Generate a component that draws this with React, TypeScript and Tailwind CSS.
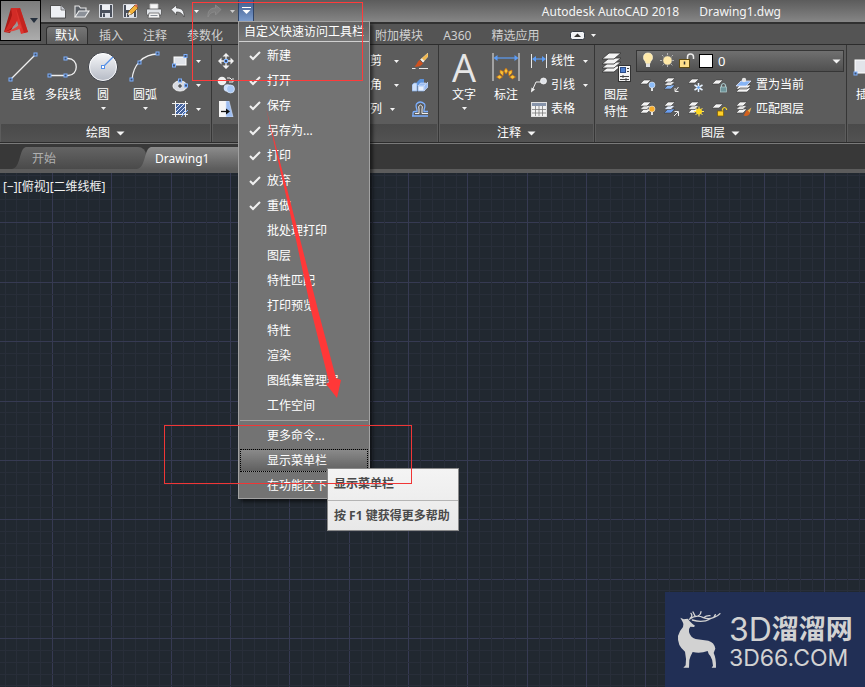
import { useState, type ReactNode } from 'react';

const FONT = "font-['Noto_Sans','Noto_Sans_CJK_SC',sans-serif]";

const ribbonTabs = ['默认', '插入', '注释', '参数化', '视图', '管理', '输出', '附加模块', 'A360', '精选应用'];

const quickItems = [
  '新建', '打开', '保存', '另存为...', '打印', '放弃', '重做', '批处理打印',
  '图层', '特性匹配', '打印预览', '特性', '渲染', '图纸集管理器', '工作空间',
];

const BLUE = '#7db0ff';

/* ---------- icons ---------- */

function Icon({ w = 16, h = 16, children }: { w?: number; h?: number; children: ReactNode }) {
  return (
    <svg width={w} height={h} viewBox={`0 0 ${w} ${h}`} fill="none" className="shrink-0" aria-hidden="true">
      {children}
    </svg>
  );
}

function Caret({ big = false }: { big?: boolean }) {
  return big ? (
    <Icon w={9} h={5}><path d="M0.5 0.5h8L4.5 4.5z" fill="#f4f4f4" /></Icon>
  ) : (
    <Icon w={5} h={3}><path d="M0 0h5L2.5 3z" fill="#f4f4f4" /></Icon>
  );
}

function Grip({ x, y }: { x: number; y: number }) {
  return <rect x={x - 1.5} y={y - 1.5} width="3" height="3" fill="#40506a" stroke={BLUE} />;
}

// a sheet seen from the side, used by every layer icon
function Sheet({ x, y, fill = '#f4f4f4' }: { x: number; y: number; fill?: string }) {
  return <path d={`M${x} ${y + 4}l4-4h7l-4 4z`} fill={fill} stroke="#3c3c3c" strokeWidth="0.6" />;
}

function Stack({ mid = '#e4e4e4', low = '#f4f4f4' }: { mid?: string; low?: string }) {
  return (
    <>
      <Sheet x={0} y={8} fill={low} />
      <Sheet x={0} y={4.5} fill={mid} />
      <Sheet x={0} y={1} />
    </>
  );
}

const NewIcon = () => (
  <Icon>
    <path d="M0.500 2.500h10.500l4.500 4.500v8h-15z" fill="#eef0f4" stroke="#3a3a3a" strokeWidth="0.8" />
    <path d="M11 2.500v4.500h4.500" fill="#c6cad2" stroke="#666" strokeWidth="0.8" />
  </Icon>
);

const OpenIcon = () => (
  <Icon>
    <path d="M1 14V3h4l1.5 2H12v3" fill="#5a5f66" stroke="#e8e8e8" strokeWidth="1.1" />
    <path d="M1 14l4-6h10l-4 6z" fill="#8b9098" stroke="#f0f0f0" strokeWidth="1.1" />
  </Icon>
);

const SaveIcon = ({ pen = false }: { pen?: boolean }) => (
  <Icon>
    <path d="M1.5 1.5h13v13h-13z" fill="#4a505c" stroke="#d6d9df" />
    <path d="M4 2h8v5H4z" fill="#eef0f4" />
    <path d="M4 10h8v4H4z" fill="#e0e3ea" />
    <path d="M5 10.5h2V14H5z" fill="#4a505c" />
    {pen && (
      <>
        <path d="M6 12l1-4 6-6 3 3-6 6z" fill="#f3b23a" stroke="#6d4a16" strokeWidth="0.7" />
        <path d="M12.5 2.5l1.5-1.5 2 2-1.5 1.5z" fill="#d86a4a" />
        <path d="M6 12l1-3 2 2z" fill="#fff" />
      </>
    )}
  </Icon>
);

const PrintIcon = () => (
  <Icon>
    <path d="M4 6V1h8v5" fill="#f6f6f6" stroke="#c4c4c4" strokeWidth="0.8" />
    <rect x="0.5" y="6" width="15" height="6" rx="1" fill="#dfe2e6" stroke="#444" strokeWidth="0.7" />
    <path d="M3 10h10l1 5H2z" fill="#f2f2f2" stroke="#555" strokeWidth="0.7" />
    <path d="M4.5 12.5h7" stroke="#8a9098" />
  </Icon>
);

const UndoIcon = ({ redo = false }: { redo?: boolean }) => (
  <Icon>
    <path
      d={redo ? 'M15 6.5L9.500 2v3C4 5 1.500 8 2 14c2-4 4-5 7.500-5v3z' : 'M1 6.500L6.500 2v3c5.500 0 8 3 7.500 9-2-4-4-5-7.500-5v3z'}
      fill={redo ? '#7d7d7d' : '#eef0f3'}
      stroke={redo ? '#909090' : '#444'}
      strokeWidth="0.7"
    />
  </Icon>
);

const LineIcon = () => (
  <Icon w={32} h={32}>
    <path d="M4 28L28 4" stroke="#f0f0f0" strokeWidth="1.200" />
    <Grip x={3.5} y={28.5} /><Grip x={28.5} y={3.5} />
  </Icon>
);

const PolylineIcon = () => (
  <Icon w={32} h={32}>
    <path d="M3 24.500h18c11 0 11-17 0-17h-2" stroke="#f0f0f0" strokeWidth="1.300" />
    <Grip x={2.5} y={24.5} /><Grip x={18.5} y={24.500} /><Grip x={18.5} y={7.5} />
  </Icon>
);

const CircleIcon = () => (
  <Icon w={32} h={32}>
    <defs>
      <linearGradient id="disc" x1="0" y1="0" x2="0" y2="1">
        <stop offset="0" stopColor="#f8f9fb" />
        <stop offset="1" stopColor="#b4b9c4" />
      </linearGradient>
    </defs>
    <circle cx="16" cy="16" r="14.500" fill="url(#disc)" stroke="#3b3e44" />
    <circle cx="16" cy="16" r="13.500" stroke="#fff" strokeWidth="0.8" />
    <path d="M16 16L26 6" stroke="#5590e8" strokeWidth="1.300" />
    <rect x="14.500" y="14.500" width="3" height="3" fill="#fff" stroke="#5590e8" />
  </Icon>
);

const ArcIcon = () => (
  <Icon w={32} h={32}>
    <path d="M3 29C4 14 14 3 29 3" stroke="#f0f0f0" strokeWidth="1.300" />
    <Grip x={2.5} y={28.500} /><Grip x={10.500} y={11.500} /><Grip x={28.500} y={2.500} />
  </Icon>
);

const RectIcon = () => (
  <Icon>
    <rect x="2" y="4" width="12" height="8" fill="#dfe2e8" stroke="#fff" />
    <Grip x={2} y={12.500} /><Grip x={13.500} y={3} />
  </Icon>
);

const EllipseIcon = () => (
  <Icon>
    <ellipse cx="8" cy="9" rx="7" ry="5" fill="#d8dbe2" stroke="#f5f5f5" />
    <path d="M6 9h4M8 7v4" stroke="#333" />
    <Grip x={8} y={3.500} /><Grip x={14} y={8.500} />
  </Icon>
);

const HatchIcon = () => (
  <Icon>
    <path d="M3.500 0v16M13.500 0v16M0 2.500h16M0 13.500h16" stroke="#f0f0f0" />
    <rect x="4" y="3" width="9" height="10" fill="#45639c" />
    <path d="M4 7l4-4M4 11l8-8M6 13l7-7M10 13l3-3" stroke="#dfe8ff" />
    <path d="M9 16l7-7" stroke={BLUE} />
  </Icon>
);

const MoveIcon = () => (
  <Icon>
    <path d="M8 0l3.500 3.500h-7zM8 16l3.500-3.500h-7zM0 8l3.500-3.500v7zM16 8l-3.500-3.500v7z" fill="#f2f2f2" />
    <path d="M8 3v3M8 10v3M3 8h3M10 8h3" stroke="#f2f2f2" strokeWidth="1.300" />
    <rect x="6.500" y="6.500" width="3" height="3" fill="#33445f" stroke={BLUE} />
  </Icon>
);

const CopyIcon = () => (
  <Icon w={18} h={18}>
    <circle cx="5" cy="5" r="4.300" fill="#f0f0f0" />
    <path d="M10 2h3l3 3M16 2v4h-4" stroke="#eee" />
    <circle cx="10.500" cy="12" r="3.800" fill="#cfe0fb" />
    <circle cx="13.500" cy="13" r="4" fill="#a9c8f4" stroke="#e4eefc" strokeWidth="0.7" />
  </Icon>
);

const StretchIcon = () => (
  <Icon>
    <path d="M1 0h7v16H1z" fill="#f5f5f5" />
    <path d="M8 0h3l4 16H8z" fill="#9dbdf0" stroke="#d6e5ff" strokeWidth="0.6" />
    <path d="M3 10.500h6" stroke="#111" strokeWidth="1.300" />
    <path d="M8 7.500l4 3-4 3z" fill="#111" />
  </Icon>
);

const EraseIcon = () => (
  <Icon>
    <path d="M16 0L8.500 6.500l2.500 2.500 5-5.500z" fill="#f0b64c" stroke="#fbe0a6" strokeWidth="0.6" />
    <path d="M8.500 6.500l1.500-1 2.500 2.500-1.500 1.500z" fill="#eceef2" />
    <path d="M7.500 7l3.500 3.500C8.500 14 5.500 14 2.500 13.500 5 12 5 8.500 7.500 7z" fill="#cf5220" />
    <path d="M0 15.500h3.500M7 15.500h9" stroke="#e8e8e8" />
  </Icon>
);

const ExplodeIcon = () => (
  <Icon>
    <path d="M5 5l3-3h4v7H5z" fill="#5d92da" />
    <path d="M0 8l2-2h3v8H0z" fill="#cfe0f8" stroke="#7faae6" strokeWidth="0.700" />
    <path d="M6 9h6v5H6z" fill="#e8f0fc" stroke="#7faae6" strokeWidth="0.700" />
    <path d="M6 9l2.500-3H14l-2 3zM12 9l4-4v5l-4 4z" fill="#9bbcf0" stroke="#dbe8ff" strokeWidth="0.600" />
  </Icon>
);

const OffsetIcon = () => (
  <Icon>
    <path d="M0 15h16M1 15v-3q0-1.500 1.500-1.500H5V9Q3.500 4.500 4.500 3q3.500-4 8 0 1 1.500-0.500 6v1.500h4" stroke={BLUE} strokeWidth="1.300" />
    <path d="M3 12.500h4V8Q5.500 5 8.500 4q3 1 1.500 4v4.500h6" stroke="#eee" />
  </Icon>
);

const DimensionIcon = () => (
  <Icon w={28} h={32}>
    <path d="M1 2v28M27 2v28" stroke="#e8e8e8" />
    <path d="M3 7h22" stroke="#5c9cf5" strokeWidth="1.200" />
    <path d="M1.500 7l4-3v6zM26.500 7l-4-3v6z" fill="#5c9cf5" />
    {['M14 17l2 3-2 3-2-3z', 'M8 19l3.500 1.500L11 25l-3-3z', 'M20 19l-3.500 1.500L17 25l3-3z', 'M4.500 26l3-2 3 2-3 2z', 'M17.500 26l3-2 3 2-3 2z'].map((d) => (
      <path key={d} d={d} fill="#f7c63a" stroke="#c86a10" strokeWidth="0.700" />
    ))}
  </Icon>
);

const LinearIcon = () => (
  <Icon>
    <path d="M0.500 1v14M15.500 1v14" stroke="#e8e8e8" />
    <path d="M2 6h12" stroke="#5c9cf5" strokeWidth="1.200" />
    <path d="M1 6l4-3v6zM15 6l-4-3v6z" fill="#5c9cf5" />
  </Icon>
);

const LeaderIcon = () => (
  <Icon>
    <path d="M1 14L5 5h5" stroke="#f0f0f0" />
    <path d="M0 15.500l0.500-5 3.500 2z" fill="#f0f0f0" />
    <circle cx="12.500" cy="4" r="3" fill="#dfe2e8" stroke="#fff" strokeWidth="0.700" />
  </Icon>
);

const TableIcon = () => (
  <Icon>
    <rect x="0.500" y="1.500" width="15" height="14" fill="#f2f2f2" stroke="#e0e0e0" />
    <path d="M1 2h14v3H1z" fill="#8794aa" />
    <path d="M1 8.500h14M1 12h14M4.500 5v10M8 5v10M11.500 5v10" stroke="#7a7a7a" strokeWidth="0.800" />
  </Icon>
);

const LayerPropsIcon = () => (
  <Icon w={30} h={32}>
    {[15, 11, 7, 2].map((y) => (
      <path key={y} d={`M1 ${y + 6}l7-6h12l-7 6z`} fill="#f4f4f4" stroke="#3a3a3a" strokeWidth="0.900" />
    ))}
    <rect x="17.500" y="14.500" width="12" height="16" fill="#f4f4f4" stroke="#333" />
    <rect x="19.500" y="16.500" width="5" height="5" fill="#4d7fd0" stroke="#2a4a86" />
    <path d="M26 17.500h2M26 20.500h2M19 25.500h9M19 28.500h9M22 24v3M25 27v3" stroke="#444" />
  </Icon>
);

const Bulb = ({ x, y, c }: { x: number; y: number; c: string }) => (
  <>
    <circle cx={x} cy={y} r="3" fill={c} stroke="#fff" strokeWidth="0.500" />
    <path d={`M${x} ${y + 3}v3`} stroke="#f2f2f2" strokeWidth="1.800" />
  </>
);

const layerTools: { name: string; icon: ReactNode }[][] = [
  [
    { name: '关闭图层', icon: <Icon><Sheet x={0} y={3} /><Bulb x={12} y={8} c="#8cbcf8" /></Icon> },
    { name: '隔离', icon: <Icon><Stack low="#86b4f4" /><path d="M14.500 10l-3 4M11 11v3.500h3.500" stroke="#eee" /></Icon> },
    { name: '冻结', icon: <Icon><Sheet x={0} y={2} /><path d="M10.500 6v9M6.500 8l8 5M14.500 8l-8 5" stroke="#e6f2ff" strokeWidth="1.500" /><circle cx="10.500" cy="10.500" r="1.300" fill="#5b9bea" /></Icon> },
    { name: '锁定', icon: <Icon><Sheet x={0} y={3} /><path d="M9.500 10V8q2-3 4 0v2" stroke="#a5c4c8" strokeWidth="1.200" /><rect x="8.500" y="10" width="6" height="5" fill="#6e959b" stroke="#b6d0d2" strokeWidth="0.700" /></Icon> },
    { name: '置为当前', icon: <Icon><path d="M0 15l4-4h11l-4 4zM0 12l4-4h11l-4 4z" fill="#f4f4f4" stroke="#3c3c3c" strokeWidth="0.600" /><path d="M0 9l5-5h10l-5 5z" fill="#86b4f4" stroke="#eef" strokeWidth="0.700" /><circle cx="8" cy="3" r="2.200" fill="#e6e6e6" /></Icon> },
  ],
  [
    { name: '打开所有图层', icon: <Icon><Stack /><Bulb x={12} y={8} c="#f7ad2b" /></Icon> },
    { name: '取消隔离', icon: <Icon><Stack mid="#dfe8f8" low="#6b9ff2" /><path d="M10 15l4-4M10.500 10.500h4V15" stroke="#eee" /></Icon> },
    { name: '解冻', icon: <Icon><Stack /><path d="M11 5.500v10M6 10.500h10M7.500 7l7 7M14.500 7l-7 7" stroke="#ffe45a" /><circle cx="11" cy="10.500" r="3" fill="#ffd91f" /></Icon> },
    { name: '解锁', icon: <Icon><Sheet x={0} y={3} /><path d="M10.500 10V8q2-3 4 0v1" stroke="#ffd91f" strokeWidth="1.200" /><rect x="5.500" y="10" width="6" height="5" fill="#ffd028" stroke="#7b5b00" strokeWidth="0.700" /></Icon> },
    { name: '匹配图层', icon: <Icon><Stack /><path d="M15.500 6.500l-4 3 2 2.500z" fill="#f0b64c" /><path d="M11 9l3 3c-1 3-4 3.500-6.500 2.500C9 13 9 11 11 9z" fill="#d2601e" /></Icon> },
  ],
];

/* ---------- ribbon parts ---------- */

function Panel({ title, className, children }: { title: string; className: string; children: ReactNode }) {
  return (
    <section className={`flex flex-col shrink-0 border-r border-[#363636] ${className}`}>
      <div className="flex h-[79px] pt-1">{children}</div>
      <button className="flex h-[18px] items-center justify-center gap-[6px] bg-gradient-to-b from-[#4a4a4a] to-[#525252] mx-px">
        {title}
        {title && <Caret big />}
      </button>
    </section>
  );
}

interface BigButtonProps {
  label: string;
  icon: ReactNode;
  className: string;
  caret?: boolean;
}

function BigButton({ label, icon, className, caret }: BigButtonProps) {
  return (
    <button className={`flex flex-col items-center shrink-0 ${className}`}>
      <span className="flex h-9 items-center">{icon}</span>
      <span className="leading-5 whitespace-nowrap">{label}</span>
      {caret && <span className="pt-[2px]"><Caret /></span>}
    </button>
  );
}

interface SmallButtonProps {
  label?: string;
  name?: string;
  icon?: ReactNode;
  caret?: string;
}

function SmallButton({ label, name, icon, caret }: SmallButtonProps) {
  return (
    <button aria-label={label ?? name} className="flex h-6 items-center">
      <span className="flex w-6 justify-center">{icon}</span>
      {label && <span className="whitespace-nowrap">{label}</span>}
      {caret && <span className={`flex justify-center ${caret}`}><Caret /></span>}
    </button>
  );
}

function TitleBar({ menuOpen, onToggle }: { menuOpen: boolean; onToggle: () => void }) {
  const tool = 'flex w-6 h-[22px] items-center justify-center';
  return (
    <header className="flex h-6 shrink-0 border-b-2 border-[#303030] bg-gradient-to-b from-[#5c5c5c] to-[#868686] pl-[5px]">
      <button aria-label="新建" className={tool}><NewIcon /></button>
      <button aria-label="打开" className={tool}><OpenIcon /></button>
      <button aria-label="保存" className={tool}><SaveIcon /></button>
      <button aria-label="另存为" className={tool}><SaveIcon pen /></button>
      <button aria-label="打印" className={tool}><PrintIcon /></button>
      <button aria-label="放弃" className={tool}><UndoIcon /></button>
      <button aria-label="放弃列表" className="flex w-3 h-[22px] items-center justify-center"><Caret /></button>
      <button aria-label="重做" className={tool}><UndoIcon redo /></button>
      <button aria-label="重做列表" className="flex w-3 h-[22px] items-center justify-center opacity-70"><Caret /></button>
      <button
        aria-label="自定义快速访问工具栏"
        aria-expanded={menuOpen}
        onClick={onToggle}
        className="flex w-4 h-[21px] items-center justify-center border-x border-[#2f4468] bg-gradient-to-b from-[#3e5a8c] to-[#7c9ccc]"
      >
        <Icon w={9} h={8}><path d="M0 0.500h9" stroke="#fff" /><path d="M0.500 3h8L4.500 7z" fill="#fff" /></Icon>
      </button>
      <h1 className="ml-auto flex gap-5 pr-[84px] leading-[23px] text-[#f4f4f4] whitespace-nowrap">
        <span>Autodesk AutoCAD 2018</span>
        <span>Drawing1.dwg</span>
      </h1>
    </header>
  );
}

function RibbonTabs() {
  const [active, setActive] = useState('默认');
  return (
    <nav className="flex h-[20px] items-end gap-[2px] bg-[#545454] pl-[5px]">
      {ribbonTabs.map((t) => (
        <button
          key={t}
          onClick={() => setActive(t)}
          className={`h-[18px] px-2 leading-[16px] whitespace-nowrap border-x border-t ${
            t === active
              ? 'rounded-t-sm border-[#2e2e2e] bg-gradient-to-b from-[#767676] to-[#5c5c5c] text-white'
              : 'border-transparent text-[#d0d0d0]'
          }`}
        >
          {t}
        </button>
      ))}
      <button aria-label="最小化功能区" className="flex h-[18px] items-center gap-[6px] pl-[20px]">
        <Icon w={15} h={9}>
          <rect x="0.500" y="0.500" width="14" height="8" rx="2" fill="#f0f2f5" stroke="#333a44" />
          <path d="M4 6h7L7.500 2.500z" fill="#333" />
        </Icon>
        <Caret />
      </button>
    </nav>
  );
}

function Ribbon() {
  return (
    <div className="flex overflow-hidden border-y border-[#2c2c2c] bg-[#5c5c5c] text-white">
      <Panel title="绘图" className="w-[212px]">
        <div className="flex pl-1">
          <BigButton label="直线" icon={<LineIcon />} className="w-[38px]" />
          <BigButton label="多段线" icon={<PolylineIcon />} className="w-[42px]" />
          <BigButton label="圆" icon={<CircleIcon />} className="w-[38px]" caret />
          <BigButton label="圆弧" icon={<ArcIcon />} className="w-[46px]" caret />
          <div>
            <SmallButton name="矩形" icon={<RectIcon />} caret="w-3" />
            <SmallButton name="椭圆" icon={<EllipseIcon />} caret="w-3" />
            <SmallButton name="图案填充" icon={<HatchIcon />} caret="w-3" />
          </div>
        </div>
      </Panel>

      <Panel title="修改" className="w-[227px]">
        <div className="flex pl-[2px]">
          <div className="w-[60px]">
            <SmallButton label="移动" icon={<MoveIcon />} />
            <SmallButton label="复制" icon={<CopyIcon />} />
            <SmallButton label="拉伸" icon={<StretchIcon />} />
          </div>
          <div className="w-[60px]">
            <SmallButton label="旋转" />
            <SmallButton label="镜像" />
            <SmallButton label="缩放" />
          </div>
          <div className="w-[74px]">
            <SmallButton label="修剪" caret="w-7" />
            <SmallButton label="圆角" caret="w-7" />
            <SmallButton label="阵列" caret="w-5" />
          </div>
          <div>
            <SmallButton name="删除" icon={<EraseIcon />} />
            <SmallButton name="分解" icon={<ExplodeIcon />} />
            <SmallButton name="偏移" icon={<OffsetIcon />} />
          </div>
        </div>
      </Panel>

      <Panel title="注释" className="w-[156px]">
        <div className="flex pl-1">
          <BigButton
            label="文字"
            icon={<span className="font-['Open_Sans','Noto_Sans',sans-serif] text-[38px] leading-[52px] text-[#e6e6e6]">A</span>}
            className="w-[42px]"
            caret
          />
          <BigButton label="标注" icon={<DimensionIcon />} className="w-[42px]" />
          <div>
            <SmallButton label="线性" icon={<LinearIcon />} caret="w-5" />
            <SmallButton label="引线" icon={<LeaderIcon />} caret="w-5" />
            <SmallButton label="表格" icon={<TableIcon />} />
          </div>
        </div>
      </Panel>

      <Panel title="图层" className="w-[252px]">
        <button className="flex w-[38px] ml-[2px] shrink-0 flex-col items-center">
          <span className="flex h-9 items-center"><LayerPropsIcon /></span>
          <span className="leading-5">图层</span>
          <span className="leading-[14px]">特性</span>
        </button>
        <div className="flex-1 pl-px">
          <div className="flex h-[22px] my-px mr-[2px] items-center border border-[#363636] bg-gradient-to-b from-[#707070] to-[#505050] pl-[3px]">
            <Icon w={16} h={18}>
              <path d="M8 1q4.500 0 4.500 4.500c0 3-2 3-2.500 6H6C5.500 8.500 3.500 8.500 3.500 5.500Q3.500 1 8 1z" fill="#ffe9a8" stroke="#fff6d8" strokeWidth="0.700" />
              <path d="M6 12h4v3H6z" fill="#e0e0e0" />
            </Icon>
            <Icon w={22} h={18}>
              <path d="M11.500 1v15M4 8.500h15M6 3l11 11M17 3L6 14" stroke="#b4b4b4" strokeDasharray="2 1" />
              <circle cx="11.500" cy="8.500" r="4.500" fill="#ffe9a8" stroke="#8a8a8a" strokeWidth="0.600" />
            </Icon>
            <Icon w={18} h={18}>
              <rect x="1.500" y="7.500" width="10" height="8" fill="#ffe08a" stroke="#5f4b12" />
              <path d="M6.500 9.500v3" stroke="#333" strokeWidth="1.500" />
              <path d="M9.500 7V5q0-3 3-3t3 3v2" stroke="#ececec" strokeWidth="1.500" />
            </Icon>
            <span className="ml-[3px] h-[14px] w-[14px] shrink-0 border border-black bg-white" />
            <select aria-label="图层" className="flex-1 min-w-0 appearance-none bg-transparent pl-[5px] text-[13px] leading-5 outline-none">
              <option>0</option>
            </select>
            <span className="pr-[2px]"><Caret big /></span>
          </div>
          {layerTools.map((row, i) => (
            <div key={i} className="flex">
              {row.map((t, j) => (
                <SmallButton key={t.name} name={t.name} icon={t.icon} label={j === 4 ? t.name : undefined} />
              ))}
            </div>
          ))}
        </div>
      </Panel>

      <Panel title="" className="flex-1 min-w-[60px]">
        <BigButton
          label="插入"
          icon={
            <Icon w={32} h={32}>
              <rect x="3" y="9" width="24" height="13" fill="#e2e4ea" stroke="#fff" />
              <Grip x={3.500} y={22.500} />
            </Icon>
          }
          className="w-[42px]"
        />
      </Panel>
    </div>
  );
}

function TabEdge({ from, to }: { from: string; to: string }) {
  return (
    <svg width="14" height="22" viewBox="0 0 14 22" className="shrink-0" aria-hidden="true">
      <defs>
        <linearGradient id={`edge${from}`} x1="0" y1="0" x2="0" y2="1">
          <stop offset="0" stopColor={`#${from}`} />
          <stop offset="1" stopColor={`#${to}`} />
        </linearGradient>
      </defs>
      <path d="M0 22C9 21 7 1 14 0v22z" fill={`url(#edge${from})`} />
    </svg>
  );
}

function DocumentTabs() {
  return (
    <div className="flex h-[30px] items-end border-b-4 border-t border-[#5c5c5c] border-t-[#7a7a7a] bg-[#383838] pl-[12px]">
      <button className="flex">
        <TabEdge from="646464" to="4a4a4a" />
        <span className="h-[22px] w-[120px] rounded-tr-lg bg-gradient-to-b from-[#646464] to-[#4a4a4a] pl-[6px] text-left leading-6 text-[#b0b0b0]">
          开始
        </span>
      </button>
      <button className="-ml-[9px] flex">
        <TabEdge from="8c8c8c" to="5c5c5c" />
        <span className="h-[22px] w-[120px] rounded-tr-lg bg-gradient-to-b from-[#8c8c8c] to-[#5c5c5c] pl-1 text-left leading-6 text-white">
          Drawing1
        </span>
      </button>
    </div>
  );
}

/* ---------- drawing area ---------- */

function Grid() {
  const step = 11.87;
  const lines = Array.from({ length: 220 }, (_, i) => i);
  return (
    <svg className="absolute inset-0 h-full w-full" aria-hidden="true" shapeRendering="crispEdges">
      {lines.map((i) => {
        const x = Math.round(4.5 + i * step) + 0.5;
        const y = Math.round(2 + i * step) + 0.5;
        const stroke = i % 5 === 4 ? '#363a52' : '#282e39';
        return (
          <g key={i} stroke={stroke}>
            <line x1={x} x2={x} y1="0" y2="100%" />
            <line y1={y} y2={y} x1="0" x2="100%" />
          </g>
        );
      })}
    </svg>
  );
}

function Watermark() {
  return (
    <div className="absolute bottom-0 right-0 flex h-[95px] w-[200px] bg-[#212f55] text-[#d2d2d2]">
      <svg width="60" height="95" viewBox="30 20 180 285" className="shrink-0" aria-hidden="true">
        <path
          d="M76 97l10 5 12-2q6 8 14 15l8 6-3 4-11-1q-6 6-4 16 4 16 20 21l38 5q18 5 21 24-3 7-5 13 8 17 7 44h-13l4-6q0-17-8-29-6-5-8-15-23 9-45 3-8 14-10 24l-1 23H85l7-7q3-19-2-41-24-19-21-47 3-14 15-27 3-10-1-15z"
          fill="#d2d2d2"
        />
        <path
          d="M103 102q22-16 42-5 16 6 32-1 12-4 18-11M106 98q8-6 2-14M121 94l-7-14M130 92q8-5 8-13M146 97q8-7 19-6M176 97l5-9M112 104q30 10 54-3"
          fill="none"
          stroke="#d2d2d2"
          strokeWidth="4"
          strokeLinecap="round"
        />
      </svg>
      <div className="pt-5 pl-1">
        <p className="flex items-center h-9 font-['Inter','Noto_Sans_CJK_SC',sans-serif] whitespace-nowrap">
          <span className="text-[32px] leading-9">3D</span>
          <span className="text-[27px] leading-9 font-bold">溜溜网</span>
        </p>
        <p className="font-['Inter',sans-serif] text-[23px] leading-5 whitespace-nowrap">3D66.COM</p>
      </div>
    </div>
  );
}

/* ---------- quick access menu ---------- */

const rowText = 'flex h-[25px] w-full items-center text-left whitespace-nowrap';

function QuickMenu() {
  const [checked, setChecked] = useState(quickItems.slice(0, 7));

  const toggle = (name: string) =>
    setChecked(checked.includes(name) ? checked.filter((c) => c !== name) : [...checked, name]);

  return (
    <div className="absolute left-[238px] top-[21px] w-[132px] border border-[#a2a2a2] bg-[#737373] text-white shadow-[3px_3px_3px_rgba(0,0,0,0.5)]">
      <h2 className="h-[20px] border-b border-[#d0d0d0] bg-gradient-to-b from-[#606060] to-[#787878] text-center leading-[19px] whitespace-nowrap">
        自定义快速访问工具栏
      </h2>
      <ul className="pt-px">
        {quickItems.map((name) => (
          <li key={name}>
            <button className={rowText} onClick={() => toggle(name)}>
              <span className="flex w-7 justify-center pl-1">
                {checked.includes(name) && (
                  <Icon w={12} h={10}><path d="M1 5l3 3L11 1" stroke="#f0f0f0" strokeWidth="2" /></Icon>
                )}
              </span>
              {name}
            </button>
          </li>
        ))}
      </ul>
      <hr className="mx-px my-[2px] border-[#a2a2a2]" />
      <button className={`${rowText} pl-7`}>更多命令...</button>
      <button className={`${rowText} px-px`}>
        <span className="flex h-[23px] w-full items-center border border-dotted border-black bg-gradient-to-b from-[#8a8a8a] to-[#606060] pl-[26px]">
          显示菜单栏
        </span>
      </button>
      <button className={`${rowText} pl-7`}>在功能区下</button>
    </div>
  );
}

function Tooltip() {
  return (
    <div
      role="tooltip"
      className="absolute left-[327px] top-[468px] w-[132px] border border-[#8a8a8a] bg-gradient-to-b from-[#f4f4f4] to-[#e8e8e8] font-bold text-[#4a4a4a] whitespace-nowrap"
    >
      <p className="h-8 border-b border-[#b4b4b4] pl-[6px] leading-[30px]">显示菜单栏</p>
      <p className="h-[29px] pl-[6px] leading-[29px]">按 F1 键获得更多帮助</p>
    </div>
  );
}

function Markup() {
  return (
    <div className="pointer-events-none">
      <div className="absolute left-[192px] top-[2px] h-[79px] w-[171px] border border-[#ff3b3b]" />
      <div className="absolute left-[164px] top-[425px] h-[59px] w-[248px] border border-[#f03636]" />
      <svg className="absolute left-[260px] top-[105px]" width="90" height="300" viewBox="260 105 90 300" aria-hidden="true">
        <path d="M266 108L299 235 318 310 336 378 341 380 337 398 326 384 329 382 311 310 295 235z" fill="#ff3838" />
      </svg>
    </div>
  );
}

export default function App() {
  const [menuOpen, setMenuOpen] = useState(true);

  return (
    <div className={`relative flex min-h-screen flex-col overflow-hidden bg-[#212830] text-[12px] ${FONT}`}>
      <div className="flex bg-[#545454]">
        <button
          aria-label="应用程序菜单"
          className="flex h-[41px] w-[41px] shrink-0 items-center justify-center gap-px border border-black bg-gradient-to-b from-[#7c7c7c] to-[#acacac]"
        >
          <Icon w={26} h={30}>
            <path d="M1 26L8 2h5l2 7L7 27z" fill="#a81a16" />
            <path d="M8 2h9l8 24-7 2-3-10-3-9z" fill="#dd342e" />
            <path d="M13 2h4l8 24-4 1z" fill="#c4241f" />
            <path d="M8 2h9l-4 2 2 9q-4 10-14 13 6-9 8-17z" fill="#d22b26" />
            <path d="M1 26q10-2 16-8l1 4q-7 4-17 4z" fill="#e0463f" />
          </Icon>
          <Icon w={8} h={5}><path d="M0 0h8L4 5z" fill="#26303e" /></Icon>
        </button>
        <div className="min-w-0 flex-1">
          <TitleBar menuOpen={menuOpen} onToggle={() => setMenuOpen(!menuOpen)} />
          <RibbonTabs />
        </div>
      </div>
      <Ribbon />
      <DocumentTabs />
      <main className="relative flex-1">
        <Grid />
        <p className="relative pl-[3px] pt-1 leading-5 text-[#f0f0f0]">[−][俯视][二维线框]</p>
        <Watermark />
      </main>

      {menuOpen && <QuickMenu />}
      {menuOpen && <Tooltip />}
      <Markup />
    </div>
  );
}
